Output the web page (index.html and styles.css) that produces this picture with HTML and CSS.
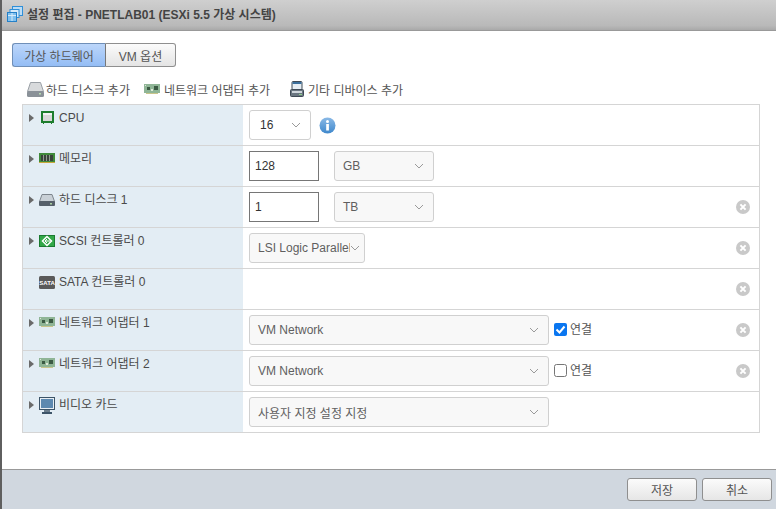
FILE: index.html
```html
<!DOCTYPE html>
<html lang="ko">
<head>
<meta charset="utf-8">
<title>설정 편집</title>
<link rel="stylesheet" href="styles.css">
</head>
<body>
<svg class="defs" width="0" height="0" aria-hidden="true">
  <defs>
    <symbol id="chev" viewBox="0 0 10 6"><path d="M1 1l4 4 4-4" fill="none" stroke="#9a9a9a" stroke-width="1"/></symbol>
    <symbol id="tri" viewBox="0 0 5 8"><path d="M0 0L5 4 0 8z" fill="#6a6a6a"/></symbol>
    <symbol id="x" viewBox="0 0 14 14"><circle cx="7" cy="7" r="7" fill="#c9c9c9"/><path d="M4.400 4.400l5.200 5.200M9.600 4.400l-5.200 5.200" stroke="#fff" stroke-width="2"/></symbol>
    <symbol id="nic" viewBox="0 0 16 10"><rect width="16" height="9" fill="#8fb596"/><rect x="3" y="3" width="3" height="3" fill="#3b5a43"/><rect x="10" y="2" width="4" height="4" fill="#3b5a43"/><rect x="1" y="1" width="1" height="1" fill="#dfe9d8"/><rect x="7" y="5" width="2" height="2" fill="#dfe9d8"/><rect x="2" y="9" width="12" height="1" fill="#c9c58a"/></symbol>
    <symbol id="disk" viewBox="0 0 16 12"><path d="M3 0.500h10l2.500 7h-15z" fill="#c9d0d6" stroke="#7d858c"/><rect x="0" y="7" width="16" height="5" rx="1" fill="#56606a"/><rect x="11" y="9" width="2" height="1.500" fill="#a9d0a0"/></symbol>
  </defs>
</svg>
<div class="dialog">
  <header class="title-bar">
    <svg class="title-icon" width="16" height="16" viewBox="0 0 16 16"><rect x="5.500" y="0.500" width="10" height="9" fill="#bcdcf5" stroke="#2f8fd8"/><rect x="3" y="3.500" width="9" height="8" fill="#d8ecfa" stroke="#2f8fd8"/><rect x="0.500" y="6.500" width="9" height="9" fill="#7fc0ee" stroke="#2480c8"/><path d="M1 9.500h8M5 7v8" stroke="#d8ecfa"/></svg>
    <h1 class="title">설정 편집 - PNETLAB01 (ESXi 5.5 가상 시스템)</h1>
  </header>
  <main class="content">
    <div class="tabs">
      <button class="tab tab-on">가상 하드웨어</button><button class="tab">VM 옵션</button>
    </div>
    <div class="toolbar">
      <span class="tool tool-disk"><svg width="17" height="15" viewBox="0 0 17 15"><path d="M3.500 0.500h10l3 9h-16z" fill="#d8dadc" stroke="#9aa0a6"/><rect x="0" y="9" width="17" height="6" rx="1.500" fill="#8a9198"/><rect x="12" y="11" width="2" height="1.500" fill="#b7dcb0"/></svg>하드 디스크 추가</span>
      <span class="tool tool-net"><svg width="16" height="10"><use href="#nic"/></svg>네트워크 어댑터 추가</span>
      <span class="tool tool-other"><svg width="14" height="16" viewBox="0 0 14 16"><rect x="2" y="0.500" width="10" height="8" rx="1" fill="#e6edf3" stroke="#3f4a55"/><rect x="2.500" y="1" width="9" height="2" fill="#3b6f9c"/><rect x="0.500" y="8.500" width="13" height="7" rx="1" fill="#6a7681" stroke="#3f4a55"/><rect x="2" y="10" width="10" height="2" fill="#cfd6dc"/><rect x="9" y="13" width="3" height="1" fill="#8fd08a"/></svg>기타 디바이스 추가</span>
    </div>
    <div class="table">
      <div class="row">
        <div class="label"><svg class="tri" width="5" height="8"><use href="#tri"/></svg><svg class="ico ico-cpu" width="13" height="13" viewBox="0 0 13 13"><rect width="13" height="12" fill="#1d7d2d"/><rect x="2" y="2" width="9" height="8" fill="#d8d8d8"/><rect x="2" y="2" width="9" height="2" fill="#f2f2f2"/><path d="M2 12h1v1H2zM10 12h1v1h-1z" fill="#1d7d2d"/></svg><span class="name">CPU</span></div>
        <div class="value">
          <div class="select w-cpu plain"><span class="val-dark">16</span><svg class="chev" width="10" height="6"><use href="#chev"/></svg></div>
          <svg class="info" width="17" height="17" viewBox="0 0 17 17"><defs><linearGradient id="ig" x1="0" y1="0" x2="0" y2="1"><stop offset="0" stop-color="#8ab9e6"/><stop offset="1" stop-color="#3f88cc"/></linearGradient></defs><circle cx="8.500" cy="8.500" r="8" fill="url(#ig)"/><circle cx="8.500" cy="4.600" r="1.500" fill="#fff"/><rect x="7.200" y="7" width="2.700" height="6.500" fill="#fff"/></svg>
        </div>
      </div>
      <div class="row">
        <div class="label"><svg class="tri" width="5" height="8"><use href="#tri"/></svg><svg class="ico" width="16" height="12" viewBox="0 0 16 12"><rect width="16" height="10" fill="#3f8a3a"/><rect x="2" y="2" width="12" height="6" fill="#39433a"/><path d="M4.500 2v6M7.500 2v6M10.500 2v6" stroke="#8f9a8d"/><rect y="9" width="16" height="1" fill="#c9a83a"/><rect x="5" y="10" width="1" height="2" fill="#e8e8e8"/></svg><span class="name">메모리</span></div>
        <div class="value">
          <div class="input">128</div>
          <div class="select w-unit"><span>GB</span><svg class="chev" width="10" height="6"><use href="#chev"/></svg></div>
        </div>
      </div>
      <div class="row">
        <div class="label"><svg class="tri" width="5" height="8"><use href="#tri"/></svg><svg class="ico" width="16" height="12"><use href="#disk"/></svg><span class="name">하드 디스크 1</span></div>
        <div class="value">
          <div class="input">1</div>
          <div class="select w-unit"><span>TB</span><svg class="chev" width="10" height="6"><use href="#chev"/></svg></div>
        </div>
        <svg class="remove" width="14" height="14"><use href="#x"/></svg>
      </div>
      <div class="row">
        <div class="label"><svg class="tri" width="5" height="8"><use href="#tri"/></svg><svg class="ico" width="16" height="12" viewBox="0 0 16 12"><rect x="0.500" y="0.500" width="15" height="11" fill="#32a848" stroke="#1a7a30"/><path d="M8 1.500L3.500 6 8 10.500 12.500 6z" fill="none" stroke="#fff" stroke-width="1.500"/><path d="M6 6h5M6 6l2-2M6 6l2 2" fill="none" stroke="#fff"/></svg><span class="name">SCSI 컨트롤러 0</span></div>
        <div class="value">
          <div class="select w-scsi"><span class="clip">LSI Logic Parallel</span><svg class="chev" width="10" height="6"><use href="#chev"/></svg></div>
        </div>
        <svg class="remove" width="14" height="14"><use href="#x"/></svg>
      </div>
      <div class="row">
        <div class="label"><span class="tri-gap"></span><svg class="ico" width="16" height="13" viewBox="0 0 16 13"><rect width="16" height="13" rx="1.500" fill="#5a5a5a"/><text x="8" y="9" text-anchor="middle" class="sata">SATA</text></svg><span class="name">SATA 컨트롤러 0</span></div>
        <div class="value"></div>
        <svg class="remove" width="14" height="14"><use href="#x"/></svg>
      </div>
      <div class="row">
        <div class="label"><svg class="tri" width="5" height="8"><use href="#tri"/></svg><svg class="ico" width="16" height="10"><use href="#nic"/></svg><span class="name">네트워크 어댑터 1</span></div>
        <div class="value">
          <div class="select w-net"><span>VM Network</span><svg class="chev" width="10" height="6"><use href="#chev"/></svg></div>
          <span class="check check-on"><svg width="13" height="13" viewBox="0 0 13 13"><rect width="13" height="13" rx="2" fill="#0a76f0"/><path d="M2.500 6.500l3 3 5-6" fill="none" stroke="#fff" stroke-width="2"/></svg></span><span class="conn">연결</span>
        </div>
        <svg class="remove" width="14" height="14"><use href="#x"/></svg>
      </div>
      <div class="row">
        <div class="label"><svg class="tri" width="5" height="8"><use href="#tri"/></svg><svg class="ico" width="16" height="10"><use href="#nic"/></svg><span class="name">네트워크 어댑터 2</span></div>
        <div class="value">
          <div class="select w-net"><span>VM Network</span><svg class="chev" width="10" height="6"><use href="#chev"/></svg></div>
          <span class="check"><svg width="13" height="13" viewBox="0 0 13 13"><rect x="0.500" y="0.500" width="12" height="12" rx="2" fill="#fff" stroke="#767676"/></svg></span><span class="conn">연결</span>
        </div>
        <svg class="remove" width="14" height="14"><use href="#x"/></svg>
      </div>
      <div class="row">
        <div class="label"><svg class="tri" width="5" height="8"><use href="#tri"/></svg><svg class="ico ico-video" width="16" height="17" viewBox="0 0 16 17"><rect x="0.500" y="0.500" width="15" height="12" fill="#e8eef3" stroke="#3c5468"/><rect x="2" y="2" width="12" height="9" fill="#5d89b0"/><rect x="5" y="13" width="6" height="2" fill="#6b7d8c"/><rect x="3" y="15" width="10" height="2" fill="#3c5468"/></svg><span class="name">비디오 카드</span></div>
        <div class="value">
          <div class="select w-net"><span>사용자 지정 설정 지정</span><svg class="chev" width="10" height="6"><use href="#chev"/></svg></div>
        </div>
      </div>
    </div>
  </main>
  <footer class="footer">
    <button class="btn">저장</button>
    <button class="btn">취소</button>
  </footer>
</div>
</body>
</html>
```

FILE: styles.css
```css
* { box-sizing: border-box; }
html, body { margin: 0; height: 100%; overflow: hidden; background: #fff; }
body { font-family: "Liberation Sans", "Noto Sans CJK KR", sans-serif; font-size: 12px; color: #555; }
.defs { position: absolute; }
.dialog { height: 509px; display: flex; flex-direction: column; border-left: 2px solid #5f5f5f; }
.title-bar { height: 31px; flex: none; display: flex; align-items: flex-start; padding: 6px 0 0 5px; gap: 4px; background: linear-gradient(#cfcfcf, #b9b9b9 85%, #a9a9a9); border-bottom: 1px solid #999; }
.title-icon { flex: none; }
.title { margin: 1px 0 0 0; font-size: 12px; line-height: 16px; font-weight: 700; color: #444; }
.content { flex: 1; padding: 12px 16px 0 10px; min-height: 0; }
.tabs { display: flex; height: 24px; }
.tab { font: inherit; color: #555; height: 24px; width: 70px; padding: 0; border: 1px solid #8f8f8f; border-left: 0; border-radius: 0 3px 3px 0; background: linear-gradient(#fbfbfb, #e4e4e4); }
.tab-on { width: 94px; border-left: 1px solid #6f8fb8; border-color: #6f8fb8 #777 #6f8fb8 #6f8fb8; border-radius: 3px 0 0 3px; background: linear-gradient(#bcd6fa, #94bdf5); }
.toolbar { display: flex; align-items: center; height: 20px; margin-top: 12px; padding-left: 15px; }
.tool { display: inline-flex; align-items: center; gap: 2px; white-space: nowrap; }
.tool-net { margin-left: 14px; gap: 4px; }
.tool-other { margin-left: 20px; gap: 4px; }
.table { margin: 5px 0 0 10px; width: 738px; border: 1px solid #d5d5d5; }
.row { position: relative; height: 41px; display: flex; border-bottom: 1px solid #d5d5d5; }
.row:last-child { height: 40px; border-bottom: 0; }
.label { width: 220px; flex: none; background: #e3edf4; display: flex; align-items: flex-start; padding: 5px 0 0 6px; line-height: 16px; }
.tri { flex: none; margin-top: 4px; }
.tri-gap { width: 5px; flex: none; }
.ico { flex: none; margin: 2px 0 0 5px; }
.ico-cpu { margin: 1px 0 0 7px; }
.ico-video { margin-top: 0; }
.name { margin-left: 4px; white-space: nowrap; color: #4a4a4a; }
.ico-cpu + .name { margin-left: 5px; }
.value { flex: 1; display: flex; align-items: center; padding-left: 6px; }
.select, .input { height: 30px; display: flex; align-items: center; font-size: 12px; }
.select { position: relative; justify-content: space-between; border: 1px solid #d0d0d0; border-radius: 3px; background: #f8f8f8; padding: 0 9px 0 8px; color: #5f5f5f; }
.select.plain { background: #fff; }
.val-dark { color: #333; }
.clip { display: block; width: 100px; overflow: hidden; white-space: nowrap; }
.chev { flex: none; }
.w-cpu { width: 62px; padding-left: 10px; }
.w-unit { width: 100px; }
.w-scsi { width: 116px; padding: 0 4px 0 8px; }
.w-net { width: 300px; }
.input { width: 70px; border: 1px solid #767676; background: #fff; padding-left: 5px; margin-right: 15px; color: #333; }
.info { margin-left: 8px; }
.check { display: inline-flex; margin-left: 5px; margin-top: -2px; }
.conn { margin-left: 3px; margin-top: -4px; }
.remove { position: absolute; right: 9px; top: 13px; }
.footer { height: 40px; flex: none; background: #d0d7df; border-top: 1px solid #999; display: flex; justify-content: flex-end; align-items: center; gap: 5px; padding: 0 4px 0 0; }
.btn { font: inherit; color: #555; width: 70px; height: 23px; padding: 0; border: 1px solid #8f8f8f; border-radius: 3px; background: linear-gradient(#fbfbfb, #e6e6e6); }
.sata { font-size: 6px; font-weight: 700; fill: #fff; font-family: "Liberation Sans", sans-serif; }
```
